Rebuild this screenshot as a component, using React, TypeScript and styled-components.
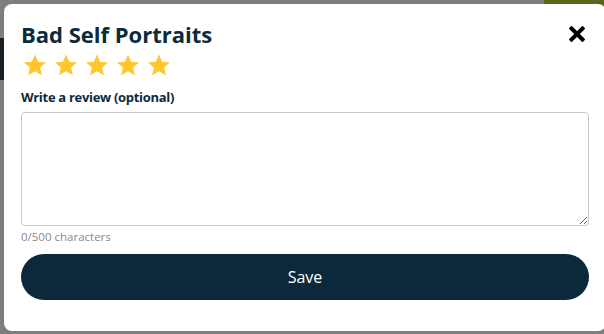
import React, { useState } from 'react';
import styled, { createGlobalStyle } from 'styled-components';

const GlobalStyle = createGlobalStyle`
    html, body {
        margin: 0;
        padding: 0;
        width: 604px;
        height: 334px;
        overflow: hidden;
        background: #ffffff;
        font-family: "Open Sans", "Lato", sans-serif;
    }
`;

const Page = styled.div`
    position: relative;
    width: 604px;
    height: 334px;
    overflow: hidden;
    background: #fdfdfd;
`;

const TopBar = styled.div`
    display: flex;
    justify-content: flex-end;
    height: 38px;
`;

const OliveButton = styled.div`
    width: 60px;
    height: 30px;
    background: #b6cc3a;
`;

const NavBand = styled.div`
    height: 42px;
    background: #33404a;
`;

const Overlay = styled.div`
    position: absolute;
    inset: 0;
    background: rgba(0, 0, 0, 0.5);
`;

const Modal = styled.div`
    position: absolute;
    left: 4px;
    top: 4px;
    width: 602px;
    height: 327px;
    box-sizing: border-box;
    padding: 17px 17px 0 17px;
    background: #ffffff;
    border-radius: 8px;
    display: flex;
    flex-direction: column;
`;

const Header = styled.div`
    display: flex;
    align-items: center;
    justify-content: space-between;
`;

const Title = styled.h2`
    margin: 0;
    font: 700 22px/26px "Open Sans", sans-serif;
    color: #0b2a3c;
    letter-spacing: 0;
`;

const CloseButton = styled.button`
    border: none;
    background: none;
    padding: 0;
    margin-right: 4px;
    width: 16px;
    height: 16px;
    display: flex;
    cursor: pointer;
`;

const Stars = styled.div`
    display: flex;
    gap: 7px;
    margin: 7px 0 0 2px;
`;

const Label = styled.label`
    margin-top: 11px;
    font: 700 13px/18px "Open Sans", sans-serif;
    color: #0b2a3c;
    letter-spacing: -0.3px;
`;

const TextArea = styled.textarea`
    margin-top: 6px;
    height: 114px;
    box-sizing: border-box;
    border: 1px solid #c8c8c8;
    border-radius: 4px;
    padding: 8px;
    font: 400 13px "Open Sans", sans-serif;
    resize: vertical;
    outline: none;
`;

const Counter = styled.div`
    margin-top: 3px;
    font: 400 11.5px/15px "Open Sans", sans-serif;
    color: #8a8a8a;
    letter-spacing: 0;
`;

const SaveButton = styled.button`
    margin-top: 10px;
    height: 46px;
    border: none;
    border-radius: 23px;
    background: #0b293b;
    color: #ffffff;
    font: 400 16px "Open Sans", sans-serif;
    cursor: pointer;
`;

function Star() {
    return (
        <svg width="24" height="23" viewBox="0 0 24 23">
            <path
                d="M12 0.5l3.2 7.2 7.8 0.7-5.9 5.2 1.8 7.7L12 17.3l-6.9 4 1.8-7.7L1 8.4l7.8-0.7z"
                fill="#fec72f"
            />
        </svg>
    );
}

export default function App() {
    const [text, setText] = useState('');

    return (
        <Page>
            <GlobalStyle />
            <TopBar><OliveButton /></TopBar>
            <NavBand />
            <Overlay />
            <Modal>
                <Header>
                    <Title>Bad Self Portraits</Title>
                    <CloseButton aria-label="Close">
                        <svg width="16" height="16" viewBox="0 0 16 16">
                            <path d="M2.5 2.5L13.5 13.5M13.5 2.5L2.5 13.5" stroke="#000" strokeWidth="4" strokeLinecap="square" />
                        </svg>
                    </CloseButton>
                </Header>
                <Stars>
                    {[0, 1, 2, 3, 4].map(i => <Star key={i} />)}
                </Stars>
                <Label>Write a review (optional)</Label>
                <TextArea value={text} maxLength={500} onChange={e => setText(e.target.value)} />
                <Counter>{text.length}/500 characters</Counter>
                <SaveButton>Save</SaveButton>
            </Modal>
        </Page>
    );
}
